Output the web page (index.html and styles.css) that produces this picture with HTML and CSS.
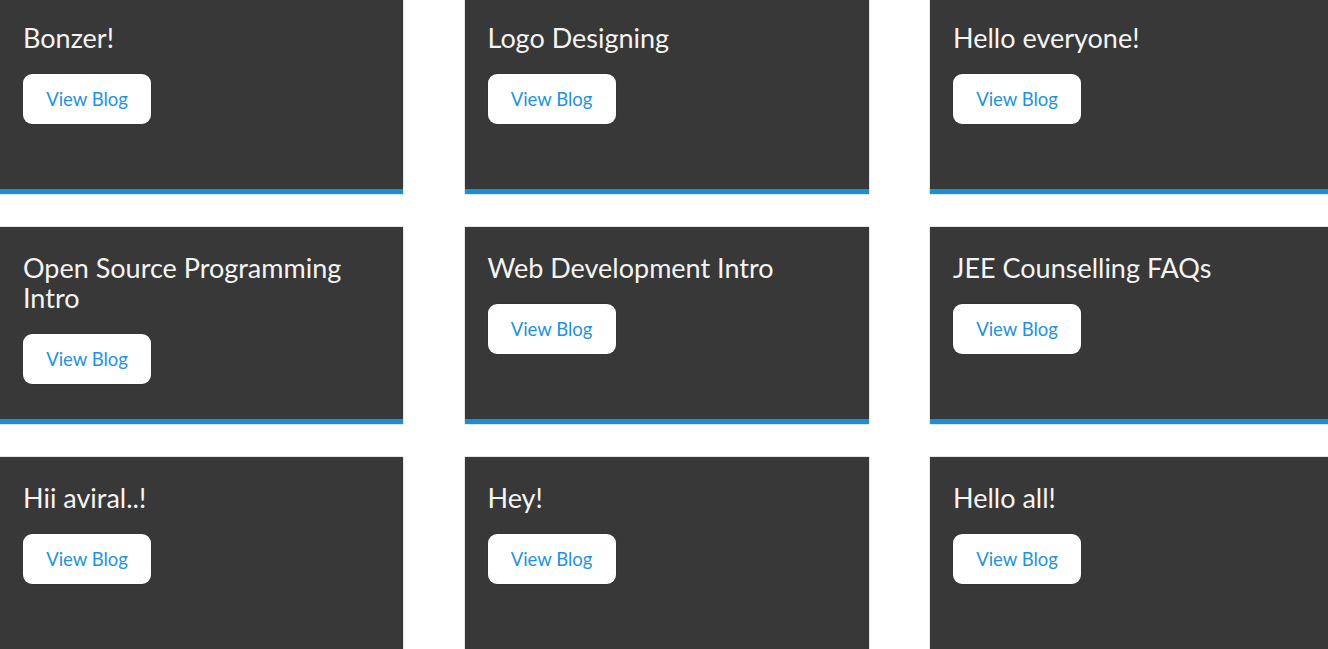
FILE: index.html
```html
<!DOCTYPE html>
<html lang="en">
<head>
<meta charset="utf-8">
<title>Blogs</title>
<link rel="stylesheet" href="styles.css">
</head>
<body>
<main class="grid">
  <article class="card"><h2 class="card-title">Bonzer!</h2><a class="btn" href="#">View Blog</a></article>
  <article class="card"><h2 class="card-title">Logo Designing</h2><a class="btn" href="#">View Blog</a></article>
  <article class="card"><h2 class="card-title">Hello everyone!</h2><a class="btn" href="#">View Blog</a></article>
  <article class="card"><h2 class="card-title">Open Source Programming Intro</h2><a class="btn" href="#">View Blog</a></article>
  <article class="card"><h2 class="card-title">Web Development Intro</h2><a class="btn" href="#">View Blog</a></article>
  <article class="card"><h2 class="card-title">JEE Counselling FAQs</h2><a class="btn" href="#">View Blog</a></article>
  <article class="card"><h2 class="card-title">Hii aviral..!</h2><a class="btn" href="#">View Blog</a></article>
  <article class="card"><h2 class="card-title">Hey!</h2><a class="btn" href="#">View Blog</a></article>
  <article class="card"><h2 class="card-title">Hello all!</h2><a class="btn" href="#">View Blog</a></article>
</main>
</body>
</html>
```
FILE: styles.css
```css
html, body {
  margin: 0;
  padding: 0;
  background: #ffffff;
  overflow: hidden;
}
body {
  font-family: Lato, "Open Sans", "Liberation Sans", sans-serif;
}
.grid {
  display: grid;
  grid-template-columns: 403px 404px 403px;
  column-gap: 61.5px;
  row-gap: 33px;
  margin-top: -3px;
}
.card {
  box-sizing: border-box;
  height: 197px;
  background: #383838;
  border-bottom: 5px solid #1a8fd6;
  padding: 26px 23px 0;
  display: flex;
  flex-direction: column;
  align-items: flex-start;
  box-shadow: 0 0 1px rgba(0, 0, 0, 0.6);
}
.card-title {
  margin: 0 0 21px;
  font-size: 27px;
  line-height: 30px;
  font-weight: 400;
  color: #f4f4f4;
}
.btn {
  box-sizing: border-box;
  display: flex;
  align-items: center;
  justify-content: center;
  width: 128px;
  height: 50px;
  background: #ffffff;
  border-radius: 9px;
  color: #1f93db;
  font-size: 18.5px;
  text-decoration: none;
  box-shadow: 0 0 1px rgba(0, 0, 0, 0.5);
}
```
